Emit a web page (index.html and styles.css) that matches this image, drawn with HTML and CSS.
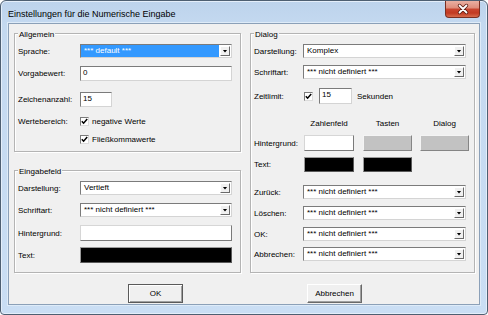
FILE: index.html
```html
<!DOCTYPE html>
<html lang="de">
<head>
<meta charset="utf-8">
<title>Einstellungen für die Numerische Eingabe</title>
<link rel="stylesheet" href="styles.css">
</head>
<body>
<div class="window">
  <div class="titlebar">
    <span class="title">Einstellungen für die Numerische Eingabe</span>
    <div class="close">
      <svg width="33" height="16" viewBox="0 0 33 16">
        <path d="M13.5 4.5 L20.5 11.5 M20.5 4.5 L13.5 11.5" stroke="#5a1a10" stroke-width="3.4" stroke-linecap="round" fill="none"/>
        <path d="M13.5 4.5 L20.5 11.5 M20.5 4.5 L13.5 11.5" stroke="#ffffff" stroke-width="1.8" stroke-linecap="round" fill="none"/>
      </svg>
    </div>
  </div>
  <div class="client">
    <div class="columns">
      <div class="leftcol">
        <div class="group g-allg">
          <span class="legend">Allgemein</span>
          <div class="row h14">
            <span class="lbl lbl-l">Sprache:</span>
            <div class="combo w152"><span class="val sel">*** default ***</span><span class="arrow"></span></div>
          </div>
          <div class="row h15 mt8">
            <span class="lbl lbl-l">Vorgabewert:</span>
            <div class="input w152">0</div>
          </div>
          <div class="row h15 mt11">
            <span class="lbl lbl-l">Zeichenanzahl:</span>
            <div class="input w32">15</div>
          </div>
          <div class="row h9 mt10">
            <span class="lbl lbl-l">Wertebereich:</span>
            <span class="cb"><svg width="7" height="7" viewBox="0 0 7 7"><path d="M0.8 3.2 L2.6 5.2 L6.2 1" stroke="#000" stroke-width="1.5" fill="none"/></svg></span>
            <span class="cbtext">negative Werte</span>
          </div>
          <div class="row h9 mt9">
            <span class="lbl lbl-l"></span>
            <span class="cb"><svg width="7" height="7" viewBox="0 0 7 7"><path d="M0.8 3.2 L2.6 5.2 L6.2 1" stroke="#000" stroke-width="1.5" fill="none"/></svg></span>
            <span class="cbtext">Fließkommawerte</span>
          </div>
        </div>
        <div class="group g-eing">
          <span class="legend">Eingabefeld</span>
          <div class="row h14">
            <span class="lbl lbl-l">Darstellung:</span>
            <div class="combo w152"><span class="val">Vertieft</span><span class="arrow"></span></div>
          </div>
          <div class="row h14 mt8">
            <span class="lbl lbl-l">Schriftart:</span>
            <div class="combo w152"><span class="val">*** nicht definiert ***</span><span class="arrow"></span></div>
          </div>
          <div class="row h16 mt8">
            <span class="lbl lbl-l">Hintergrund:</span>
            <span class="sw sw-white w152"></span>
          </div>
          <div class="row h16 mt6">
            <span class="lbl lbl-l">Text:</span>
            <span class="sw sw-black w152"></span>
          </div>
        </div>
      </div>
      <div class="group g-dialog">
        <span class="legend">Dialog</span>
        <div class="row h14">
          <span class="lbl lbl-d">Darstellung:</span>
          <div class="combo w163"><span class="val">Komplex</span><span class="arrow"></span></div>
        </div>
        <div class="row h14 mt7">
          <span class="lbl lbl-d">Schriftart:</span>
          <div class="combo w163"><span class="val">*** nicht definiert ***</span><span class="arrow"></span></div>
        </div>
        <div class="row h16 mt9">
          <span class="lbl lbl-d">Zeitlimit:</span>
          <span class="cb ml1"><svg width="7" height="7" viewBox="0 0 7 7"><path d="M0.8 3.2 L2.6 5.2 L6.2 1" stroke="#000" stroke-width="1.5" fill="none"/></svg></span>
          <div class="input w33 ml6 h16">15</div>
          <span class="ml5">Sekunden</span>
        </div>
        <div class="row h10 mt14">
          <span class="lbl lbl-d2"></span>
          <span class="hdr w50">Zahlenfeld</span>
          <span class="hdr w49 ml9">Tasten</span>
          <span class="hdr w49 ml8">Dialog</span>
        </div>
        <div class="row h16 mt7">
          <span class="lbl lbl-d2">Hintergrund:</span>
          <span class="sw sw-white w50"></span>
          <span class="sw sw-gray w49 ml9"></span>
          <span class="sw sw-gray w49 ml8"></span>
        </div>
        <div class="row h15 mt6">
          <span class="lbl lbl-d2">Text:</span>
          <span class="sw sw-black w50"></span>
          <span class="sw sw-black w49 ml9"></span>
        </div>
        <div class="row h14 mt13">
          <span class="lbl lbl-d">Zurück:</span>
          <div class="combo w163"><span class="val">*** nicht definiert ***</span><span class="arrow"></span></div>
        </div>
        <div class="row h14 mt7">
          <span class="lbl lbl-d">Löschen:</span>
          <div class="combo w163"><span class="val">*** nicht definiert ***</span><span class="arrow"></span></div>
        </div>
        <div class="row h14 mt7">
          <span class="lbl lbl-d">OK:</span>
          <div class="combo w163"><span class="val">*** nicht definiert ***</span><span class="arrow"></span></div>
        </div>
        <div class="row h14 mt6">
          <span class="lbl lbl-d">Abbrechen:</span>
          <div class="combo w163"><span class="val">*** nicht definiert ***</span><span class="arrow"></span></div>
        </div>
      </div>
    </div>
    <div class="buttons">
      <button class="btn btn-default">OK</button>
      <button class="btn">Abbrechen</button>
    </div>
  </div>
</div>
</body>
</html>
```
FILE: styles.css
```css
* { box-sizing: border-box; }
html, body { margin: 0; padding: 0; background: #ffffff; }
body {
  font-family: "Liberation Sans", Arial, sans-serif;
  font-size: 8px;
  color: #000;
}

.window {
  width: 488px;
  height: 315px;
  border: 1px solid #4e5f72;
  border-radius: 6px 6px 4px 4px;
  background: linear-gradient(to bottom, #bdd3ec 0, #c4d9f0 24px, #cadef4 100%);
  box-shadow: inset 0 0 0 1px #e4eefa;
  padding: 0 7px 9px;
  display: flex;
  flex-direction: column;
  overflow: hidden;
}

.titlebar {
  height: 22px;
  flex: none;
  display: flex;
  justify-content: space-between;
  align-items: flex-start;
}
.title {
  font-size: 9px;
  line-height: 11px;
  margin-top: 8px;
}
.close {
  width: 35px;
  height: 17px;
  border: 1px solid #7a2f22;
  border-top: none;
  border-radius: 0 0 4px 4px;
  background: linear-gradient(to bottom, #eab0a2 0%, #df8e7c 42%, #c9452f 52%, #c23a22 75%, #d76b4c 100%);
  display: flex;
  align-items: center;
  justify-content: center;
}
.close svg { display: block; }

.client {
  flex: 1;
  background: #f0f0f0;
  border: 1px solid #8ba0b8;
  box-shadow: 0 0 0 1px #deebf8;
  padding: 9px 4px 0 5px;
  display: flex;
  flex-direction: column;
}

.columns {
  display: flex;
  gap: 9px;
  height: 240px;
  flex: none;
}
.leftcol {
  width: 227px;
  display: flex;
  flex-direction: column;
  gap: 18px;
}

.group {
  position: relative;
  border: 1px solid #b4b4b4;
  box-shadow: inset 1px 1px 0 #fff, 1px 1px 0 #fff;
  display: flex;
  flex-direction: column;
  padding: 10px 8px 0 3px;
}
.g-allg { height: 119px; }
.g-eing { height: 103px; }
.g-dialog { width: 225px; height: 240px; }

.legend {
  position: absolute;
  top: -4px;
  left: 3px;
  padding: 0 1px;
  background: #f0f0f0;
  line-height: 10px;
}

.row {
  display: flex;
  align-items: center;
  flex: none;
  white-space: nowrap;
}
.h9 { height: 9px; }
.h10 { height: 10px; }
.h14 { height: 14px; }
.h15 { height: 15px; }
.h16 { height: 16px; }
.mt6 { margin-top: 6px; }
.mt7 { margin-top: 7px; }
.mt8 { margin-top: 8px; }
.mt9 { margin-top: 9px; }
.mt10 { margin-top: 10px; }
.mt11 { margin-top: 11px; }
.mt13 { margin-top: 13px; }
.mt14 { margin-top: 14px; }
.ml1 { margin-left: 1px; }
.ml5 { margin-left: 5px; }
.ml6 { margin-left: 6px; }
.ml8 { margin-left: 8px; }
.ml9 { margin-left: 9px; }

.lbl { flex: none; }
.lbl-l { width: 62px; }
.lbl-d { width: 49px; }
.lbl-d2 { width: 50px; }

.w32 { width: 32px; }
.w33 { width: 33px; }
.w49 { width: 49px; }
.w50 { width: 50px; }
.w152 { width: 152px; }
.w163 { width: 163px; }

.combo {
  display: flex;
  height: 100%;
  background: #fff;
  border: 1px solid;
  border-color: #7b7b7b #d4d4d4 #d4d4d4 #7b7b7b;
  flex: none;
}
.combo .val {
  flex: 1;
  padding-left: 3px;
  line-height: 12px;
  overflow: hidden;
}
.combo .val.sel {
  background: #3399ff;
  color: #fff;
}
.combo .arrow {
  width: 10px;
  flex: none;
  margin: 1px 1px 1px 1px;
  background: #f0f0f0;
  border: 1px solid;
  border-color: #fff #6a6a6a #6a6a6a #fff;
  display: flex;
  align-items: center;
  justify-content: center;
}
.combo .arrow::after {
  content: "";
  width: 5px;
  height: 3px;
  background: #000;
  clip-path: polygon(0 0, 100% 0, 50% 100%);
}

.input {
  height: 15px;
  flex: none;
  background: #fff;
  border: 1px solid;
  border-color: #7b7b7b #d4d4d4 #d4d4d4 #7b7b7b;
  padding-left: 2px;
  line-height: 12px;
}
.input.h16 { height: 16px; }

.cb {
  width: 9px;
  height: 9px;
  flex: none;
  background: #fff;
  border: 1px solid;
  border-color: #7b7b7b #dcdcdc #dcdcdc #7b7b7b;
  display: flex;
  align-items: center;
  justify-content: center;
}
.cb svg { display: block; }
.cbtext { margin-left: 3px; }

.hdr { text-align: center; flex: none; }

.sw {
  height: 100%;
  flex: none;
  border: 1px solid;
}
.sw-white { background: #fff; border-color: #d6d6d6 #7a7a7a #7a7a7a #d6d6d6; }
.sw-black { background: #000; border-color: #9a9a9a #5a5a5a #5a5a5a #9a9a9a; }
.sw-gray { background: #c2c2c2; border-color: #f4f4f4 #858585 #858585 #f4f4f4; }

.buttons {
  display: flex;
  gap: 124px;
  padding-left: 114px;
  margin-top: 11px;
  flex: none;
}
.btn {
  font: inherit;
  color: #000;
  width: 55px;
  height: 19px;
  padding: 0;
  background: #f0f0f0;
  border: 1px solid;
  border-color: #fff #696969 #696969 #fff;
  box-shadow: inset -1px -1px 0 #a0a0a0;
}
.btn-default {
  border-color: #5a5a5a;
  box-shadow: inset 1px 1px 0 #fff, inset -1px -1px 0 #a0a0a0;
}
```
